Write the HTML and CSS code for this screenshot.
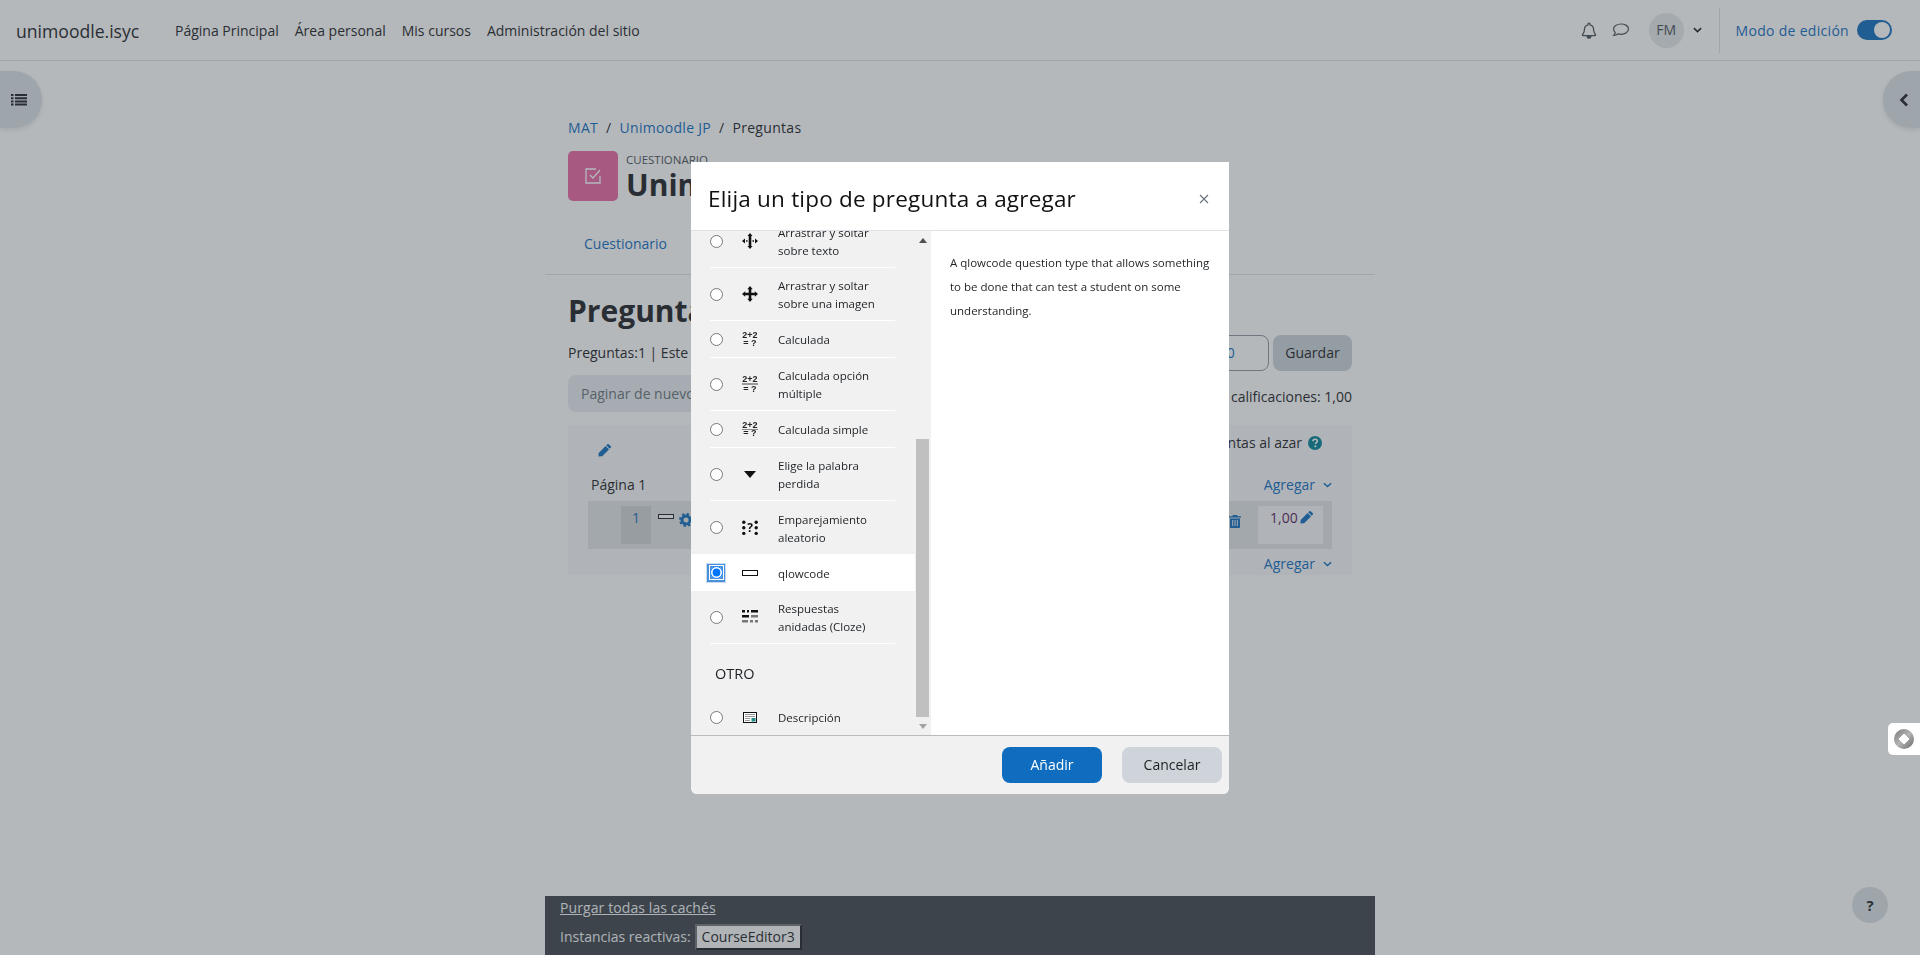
FILE: index.html
```html
<!DOCTYPE html>
<html lang="es">
<head>
	<meta charset="utf-8">
	<title>Preguntas</title>
	<link rel="stylesheet" href="styles.css">
</head>
<body>
	<div class="page">
		<header class="navbar">
			<a class="brand">unimoodle.isyc</a>
			<nav class="mainnav">
				<a>Página Principal</a>
				<a>Área personal</a>
				<a>Mis cursos</a>
				<a>Administración del sitio</a>
			</nav>
			<div class="usernav">
				<svg class="ico-bell" viewBox="0 0 16 17"><path d="M8 1.2c-.6 0-1 .4-1 1v.6C4.900 3.300 3.500 5 3.500 7.100c0 3.400-1 4.400-2 5.600-.3.400 0 .9.500.9h12c.5 0 .8-.5.500-.9-1-1.200-2-2.200-2-5.600C12.500 5 11.100 3.300 9 2.800v-.6c0-.6-.4-1-1-1zM6.300 14.800c.1.800.8 1.400 1.700 1.400s1.600-.6 1.700-1.400z" fill="none" stroke="#495057" stroke-width="1.300"/></svg>
				<svg class="ico-chat" viewBox="0 0 18 14"><path d="M9 1C4.800 1 1.500 3.100 1.500 6c0 1.300.7 2.500 1.800 3.400-.2.900-.8 2-1.500 3 1.500-.2 3-.8 4-1.500 1 .3 2 .4 3.200.4 4.200 0 7.500-2.300 7.500-5.300S13.200 1 9 1z" fill="none" stroke="#495057" stroke-width="1.200"/></svg>
				<span class="avatar">FM</span>
				<svg class="chev-down dark" viewBox="0 0 10 6"><path d="M1 1l4 3.800L9 1" fill="none" stroke="#1d2125" stroke-width="1.800"/></svg>
				<span class="divider"></span>
				<span class="editmode">Modo de edición</span>
				<span class="toggle"><i></i></span>
			</div>
		</header>

		<main class="column">
			<ol class="crumbs">
				<li><a>MAT</a></li>
				<li class="sep">/</li>
				<li><a>Unimoodle JP</a></li>
				<li class="sep">/</li>
				<li>Preguntas</li>
			</ol>
			<div class="pagehead">
				<span class="modicon">
					<svg viewBox="0 0 20 20" width="20" height="20"><path d="M17 10v7H3V3h10" fill="none" stroke="#fff" stroke-width="1.300"/><path d="M7 9l3 3 7-8" fill="none" stroke="#fff" stroke-width="1.300"/></svg>
				</span>
				<div>
					<div class="modtype">CUESTIONARIO</div>
					<div class="modname">Unimoodle JP</div>
				</div>
			</div>
			<div class="tabs">
				<a>Cuestionario</a>
			</div>
			<h2 class="heading">Preguntas</h2>
			<div class="bar">
				<span>Preguntas:1 | Este cuestionario está abierto</span>
				<div class="gradeform">
					<span class="gradeinput">10,00</span>
					<span class="btn-save">Guardar</span>
				</div>
			</div>
			<div class="bar second">
				<span class="btn-repage">Paginar de nuevo</span>
				<span class="totals">Total de calificaciones: 1,00</span>
			</div>
			<section class="panel">
				<div class="panel-top">
					<svg class="ico-pencil" viewBox="0 0 16 16"><path d="M12.200 1.300l2.500 2.500c.4.400.4 1 0 1.400L13.300 6.600 9.400 2.700l1.400-1.400c.4-.4 1-.4 1.400 0zM8.700 3.400l3.900 3.900-7.900 7.900-4.200.3.300-4.200z" fill="#0f6cbf"/></svg>
					<span class="shuffle">Mezclar preguntas al azar
						<svg class="ico-help" viewBox="0 0 14 14"><circle cx="7" cy="7" r="7" fill="#008196"/><path d="M4.800 5.300C4.900 4 5.900 3.200 7.100 3.200c1.300 0 2.200.8 2.200 1.900 0 1.600-1.900 1.500-1.900 3" fill="none" stroke="#fff" stroke-width="1.600"/><rect x="6.400" y="9.400" width="1.900" height="1.800" fill="#fff"/></svg>
					</span>
				</div>
				<div class="page-row">
					<span>Página 1</span>
					<a class="addlink">Agregar <svg class="chev-down" viewBox="0 0 10 6"><path d="M1 1l4 3.800L9 1" fill="none" stroke="#0f6cbf" stroke-width="1.600"/></svg></a>
				</div>
				<div class="slot">
					<span class="slotnum">1</span>
					<span class="slotbox"></span>
					<svg class="ico-gear" viewBox="0 0 14 14"><circle cx="7" cy="7" r="4" fill="none" stroke="#0f6cbf" stroke-width="2.800"/><circle cx="7" cy="7" r="6" fill="none" stroke="#0f6cbf" stroke-width="2" stroke-dasharray="2.400 2.300"/></svg>
					<svg class="ico-trash" viewBox="0 0 12 14"><path d="M4 1h4l.7 1.200H12v1.400H0V2.200h3.300zM1 4.500h10V13c0 .6-.4 1-1 1H2c-.6 0-1-.4-1-1z" fill="#0f6cbf"/><path d="M3.700 6v6M6 6v6M8.300 6v6" stroke="#e9ecef" stroke-width="1"/></svg>
					<span class="slotmark">1,00<svg class="ico-pencil" viewBox="0 0 16 16"><path d="M12.200 1.300l2.500 2.500c.4.400.4 1 0 1.400L13.300 6.600 9.400 2.700l1.400-1.400c.4-.4 1-.4 1.400 0zM8.700 3.400l3.900 3.900-7.900 7.900-4.200.3.300-4.200z" fill="#0f6cbf"/></svg></span>
				</div>
				<div class="page-row last">
					<a class="addlink">Agregar <svg class="chev-down" viewBox="0 0 10 6"><path d="M1 1l4 3.800L9 1" fill="none" stroke="#0f6cbf" stroke-width="1.600"/></svg></a>
				</div>
			</section>
			<footer class="pagefoot">
				<a>Purgar todas las cachés</a>
				<div class="reactive">Instancias reactivas: <span class="reactive-btn">CourseEditor3</span></div>
			</footer>
		</main>

		<span class="drawer-toggle left">
			<svg viewBox="0 0 16 13" width="16" height="13"><path d="M0 1h2.500v2H0zM4 1h12v2H4zM0 4.200h2.500v2H0zM4 4.200h12v2H4zM0 7.400h2.500v2H0zM4 7.400h12v2H4zM0 10.600h2.500v2H0zM4 10.600h12v2H4z" fill="#1d2125"/></svg>
		</span>
		<span class="drawer-toggle right">
			<svg viewBox="0 0 10 14" width="10" height="14"><path d="M8 1.500L2.500 7 8 12.500" fill="none" stroke="#1d2125" stroke-width="2.600"/></svg>
		</span>
		<span class="helpbtn">?</span>
	</div>

	<div class="backdrop"></div>

	<div class="sidetab">
		<svg viewBox="0 0 22 22" width="22" height="22">
			<defs><linearGradient id="ring" x1="0" y1="0" x2="1" y2="1"><stop offset="0" stop-color="#777"/><stop offset=".5" stop-color="#b5b5b5"/><stop offset="1" stop-color="#666"/></linearGradient></defs>
			<circle cx="11" cy="11" r="10" fill="url(#ring)"/>
			<path d="M11 6L16 11 11 16 6 11z" fill="#fff" stroke="#fff" stroke-linejoin="round"/>
		</svg>
	</div>

	<div class="modalwrap">
		<div class="modal">
			<div class="modal-head">
				<h5>Elija un tipo de pregunta a agregar</h5>
				<svg class="closex" viewBox="0 0 10 10" width="10" height="10"><path d="M1 1l8 8M9 1l-8 8" stroke="#6a737b" stroke-width="1.100"/></svg>
			</div>
			<div class="modal-body">
				<div class="options">
					<div class="options-scroll">
						<ul class="optlist">
							<li class="opt"><div class="opt-in">
								<input type="radio" name="qtype">
								<span class="qicon"><svg viewBox="0 0 16 16" width="16" height="16"><path d="M8 0l2.500 3h-5zM8 16l-2.500-3h5zM0 8l3-2.500v5zM16 8l-3 2.500v-5z" fill="#111"/><path d="M6.700 3h2.600v10H6.700zM4 7.200h1.500v1.600H4zM10.500 7.200H12v1.600h-1.500z" fill="#111"/></svg></span>
								<span class="optlabel">Arrastrar y soltar sobre texto</span>
							</div></li>
							<li class="opt"><div class="opt-in">
								<input type="radio" name="qtype">
								<span class="qicon"><svg viewBox="0 0 16 16" width="16" height="16"><path d="M8 0l2.700 3.200H9.300v3.500h3.500V5.300L16 8l-3.200 2.700V9.300H9.300v3.500h1.400L8 16l-2.700-3.200h1.400V9.300H3.200v1.400L0 8l3.200-2.700v1.400h3.500V3.200H5.300z" fill="#111"/></svg></span>
								<span class="optlabel">Arrastrar y soltar sobre una imagen</span>
							</div></li>
							<li class="opt"><div class="opt-in">
								<input type="radio" name="qtype">
								<span class="qicon calc"><b>2+2</b><b>= ?</b></span>
								<span class="optlabel">Calculada</span>
							</div></li>
							<li class="opt"><div class="opt-in">
								<input type="radio" name="qtype">
								<span class="qicon calc multi"><b>2+2</b><b>= ?</b></span>
								<span class="optlabel">Calculada opción múltiple</span>
							</div></li>
							<li class="opt"><div class="opt-in">
								<input type="radio" name="qtype">
								<span class="qicon calc simple"><b>2+2</b><b>= ?</b></span>
								<span class="optlabel">Calculada simple</span>
							</div></li>
							<li class="opt"><div class="opt-in">
								<input type="radio" name="qtype">
								<span class="qicon"><svg viewBox="0 0 14 8" width="14" height="8"><path d="M1 1h12L7 8z" fill="#111"/></svg></span>
								<span class="optlabel">Elige la palabra perdida</span>
							</div></li>
							<li class="opt nosep"><div class="opt-in">
								<input type="radio" name="qtype">
								<span class="qicon"><svg viewBox="0 0 16 16" width="16" height="16" fill="#111"><circle cx="1.800" cy="2.200" r="1.700"/><circle cx="1.800" cy="7.800" r="1.700"/><circle cx="1.800" cy="13.400" r="1.700"/><circle cx="14.200" cy="2.200" r="1.700"/><circle cx="14.200" cy="7.800" r="1.700"/><circle cx="14.200" cy="13.400" r="1.700"/><text x="8" y="12" font-size="12" font-weight="700" text-anchor="middle" font-family="Open Sans, sans-serif">?</text></svg></span>
								<span class="optlabel">Emparejamiento aleatorio</span>
							</div></li>
							<li class="opt selected"><div class="opt-in">
								<span class="radiofocus"><input type="radio" name="qtype" checked></span>
								<span class="qicon"><span class="blankbox"></span></span>
								<span class="optlabel">qlowcode</span>
							</div></li>
							<li class="opt"><div class="opt-in">
								<input type="radio" name="qtype">
								<span class="qicon"><svg viewBox="0 0 16 14" width="16" height="14"><path d="M0 0h3v2.500H0zM5 0h2v2.500H5zM9 0h7v2.500H9zM0 5h7v2.500H0z" fill="#111"/><path d="M9 5h7v2.500H9zM0 10h6v2.500H0zM8 10h3v2.500H8zM13 10h3v2.500h-3z" fill="#777"/></svg></span>
								<span class="optlabel">Respuestas anidadas (Cloze)</span>
							</div></li>
						</ul>
						<h6 class="optgroup">OTRO</h6>
						<div class="opt bare"><div class="opt-in">
							<input type="radio" name="qtype">
							<span class="qicon"><svg viewBox="0 0 14 11" width="14" height="11"><rect x=".5" y=".5" width="13" height="10" fill="#fff" stroke="#111"/><path d="M2 2.500h10M2 4.500h10M2 6.500h5M2 8.500h5" stroke="#999"/><rect x="8.500" y="6" width="4" height="3.500" fill="#1f8a8a"/></svg></span>
							<span class="optlabel">Descripción</span>
						</div></div>
					</div>
					<div class="rail">
						<svg class="arrow" viewBox="0 0 8 5" width="8" height="5"><path d="M4 0l4 5H0z" fill="#505050"/></svg>
						<span class="rail-gap"></span>
						<span class="thumb"></span>
						<svg class="arrow" viewBox="0 0 8 5" width="8" height="5"><path d="M0 0h8L4 5z" fill="#a3a3a3"/></svg>
					</div>
				</div>
				<div class="summary">A qlowcode question type that allows something to be done that can test a student on some understanding.</div>
			</div>
			<div class="modal-foot">
				<span class="btn primary">Añadir</span>
				<span class="btn secondary">Cancelar</span>
			</div>
		</div>
	</div>
</body>
</html>
```

FILE: styles.css
```css
*{
	margin:0;
	padding:0;
	box-sizing:border-box;
}
html,body{
	height:955px;
	overflow:hidden;
}
body{
	background:#fff;
	color:#1d2125;
	font-family:"Open Sans","Noto Sans",sans-serif;
	font-size:14px;
	line-height:22px;
}
a{
	color:#0f6cbf;
}
ul,ol{
	list-style:none;
}
svg{
	display:block;
	flex:none;
}

/* page under the backdrop */
.page{
	height:955px;
	display:flex;
	flex-direction:column;
}
.navbar{
	height:61px;
	flex:none;
	display:flex;
	align-items:center;
	padding:0 28px 0 16px;
	border-bottom:1px solid #dee2e6;
}
.brand{
	font-size:17.600px;
	color:#1d2125;
	padding-top:2px;
	margin-right:35px;
	width:124px;
	white-space:nowrap;
}
.mainnav{
	display:flex;
	gap:16px;
	padding-top:2px;
}
.mainnav a{
	color:#1d2125;
}
.usernav{
	margin-left:auto;
	display:flex;
	align-items:center;
}
.ico-bell{
	width:16px;
	height:17px;
}
.ico-chat{
	width:18px;
	height:14px;
	margin-left:15px;
}
.avatar{
	width:35px;
	height:35px;
	border-radius:50%;
	background:#e6e8ea;
	display:flex;
	align-items:center;
	justify-content:center;
	color:#495057;
	margin-left:19px;
}
.chev-down{
	width:9px;
	height:6px;
}
.chev-down.dark{
	margin-left:9px;
}
.divider{
	width:1px;
	height:45px;
	background:#dee2e6;
	margin:0 16px 0 17px;
}
.editmode{
	color:#0f6cbf;
	letter-spacing:.3px;
	padding-top:2px;
}
.toggle{
	width:35px;
	height:20px;
	border-radius:10px;
	background:#0f6cbf;
	margin-left:8px;
	display:flex;
	justify-content:flex-end;
	align-items:center;
	padding-right:2px;
}
.toggle i{
	width:16px;
	height:16px;
	border-radius:50%;
	background:#fff;
}

.column{
	width:830px;
	flex:1;
	margin:0 auto;
	padding:56px 23px 0;
	display:flex;
	flex-direction:column;
}
.crumbs{
	display:flex;
	gap:8px;
	height:22px;
	margin-bottom:12px;
	letter-spacing:.3px;
}
.pagehead{
	display:flex;
	gap:8px;
	height:50px;
}
.modicon{
	width:50px;
	height:50px;
	background:#eb66a2;
	border-radius:5px;
	display:flex;
	align-items:center;
	justify-content:center;
}
.modtype{
	font-size:11.500px;
	line-height:14px;
	color:#495057;
	margin-top:2px;
}
.modname{
	font-size:30px;
	line-height:36px;
	font-weight:700;
}
.tabs{
	margin:20px -23px 0;
	height:54px;
	padding:12px 0 0 39px;
	border-bottom:1px solid #dee2e6;
}
.heading{
	font-size:30px;
	line-height:38px;
	font-weight:700;
	margin-top:17px;
}
.bar{
	display:flex;
	justify-content:space-between;
	align-items:center;
	height:36px;
	margin-top:5px;
}
.bar.second{
	height:37px;
	margin-top:4px;
	align-items:flex-start;
}
.gradeform{
	display:flex;
	gap:4px;
}
.gradeinput{
	width:79px;
	height:36px;
	border:1px solid #8f959e;
	border-radius:8px;
	padding:6px 8px;
	color:#0f6cbf;
}
.btn-save{
	width:79px;
	height:36px;
	border-radius:8px;
	background:#ced4da;
	text-align:center;
	padding-top:7px;
}
.btn-repage{
	height:37px;
	width:200px;
	border-radius:8px;
	background:#e9ecef;
	color:#6a737b;
	padding:8px 13px;
}
.totals{
	padding-top:11px;
}
.panel{
	margin-top:13px;
	height:150px;
	padding:0 20px;
	background:#f8f9fa;
}
.panel-top{
	height:49px;
	padding:7px 0 0 10px;
	display:flex;
	justify-content:space-between;
	align-items:flex-start;
}
.panel-top .ico-pencil{
	margin-top:11px;
}
.ico-pencil{
	width:14px;
	height:14px;
}
.shuffle{
	display:flex;
	align-items:center;
	gap:6px;
	margin-right:10px;
}
.ico-help{
	width:14px;
	height:14px;
}
.page-row{
	display:flex;
	justify-content:space-between;
	padding-left:3px;
	height:22px;
}
.page-row.last{
	justify-content:flex-end;
	margin-top:4px;
}
.addlink{
	display:flex;
	align-items:center;
	gap:8px;
}
.slot{
	height:48px;
	margin-top:5px;
	background:#e3e5e7;
	padding:5px 9px 5px 33px;
	display:flex;
	align-items:flex-start;
}
.slotnum{
	width:30px;
	height:38px;
	background:#d2d4d6;
	text-align:center;
	padding-top:1px;
	color:#0f6cbf;
}
.slotbox{
	width:16px;
	height:5px;
	border:1px solid #1d2125;
	background:#fff;
	margin:8px 5px 0 7px;
}
.ico-gear{
	width:14px;
	height:14px;
	margin-top:7px;
}
.ico-trash{
	width:12px;
	height:14px;
	margin:8px 17px 0 auto;
}
.slotmark{
	width:65px;
	height:38px;
	background:#f8f9fa;
	display:flex;
	align-items:flex-start;
	padding:1px 0 0 12px;
	color:#5a1a5c;
	gap:2px;
}
.slotmark .ico-pencil{
	margin-top:3px;
}
.pagefoot{
	margin:auto -23px 0;
	height:59px;
	background:#3f444b;
	color:#f4f6f7;
	padding:0 15px;
}
.pagefoot a{
	display:block;
	color:#f4f6f7;
	text-decoration:underline;
	line-height:24px;
	letter-spacing:.1px;
}
.reactive{
	display:flex;
	align-items:center;
	gap:4px;
	height:28px;
	margin-top:3px;
}
.reactive-btn{
	height:26px;
	padding:0 5px;
	background:#f9f9f9;
	color:#1d2125;
	border:2px solid #1d2125;
	border-left-color:#777;
	border-top-color:#777;
	line-height:22px;
}

.drawer-toggle{
	position:absolute;
	top:71px;
	width:42px;
	height:57px;
	background:#dee2e6;
	box-shadow:0 2px 4px rgba(0,0,0,.1);
	display:flex;
	align-items:center;
}
.drawer-toggle.left{
	left:0;
	border-radius:0 28px 28px 0;
	padding-left:11px;
}
.drawer-toggle.right{
	right:0;
	width:37px;
	border-radius:28px 0 0 28px;
	padding-left:16px;
}
.helpbtn{
	position:absolute;
	left:1852px;
	top:887px;
	width:36px;
	height:36px;
	border-radius:50%;
	background:#dee2e6;
	text-align:center;
	font-weight:700;
	font-size:15px;
	line-height:36px;
}

.backdrop{
	position:fixed;
	inset:0;
	background:rgba(58,68,76,.38);
}
.sidetab{
	position:fixed;
	right:0;
	top:723px;
	width:32px;
	height:32px;
	background:#fff;
	border-radius:5px 0 0 5px;
	padding:5px;
}

/* modal */
.modalwrap{
	position:fixed;
	inset:0;
	display:flex;
	justify-content:center;
	padding-top:162px;
}
.modal{
	width:538px;
	height:632px;
	background:#fff;
	border-radius:0 0 6px 6px;
	overflow:hidden;
}
.modal-head{
	height:69px;
	padding:5px 20px 0 17px;
	border-bottom:1px solid #dee2e6;
	display:flex;
	align-items:center;
	justify-content:space-between;
}
.modal-head h5{
	font-size:22.500px;
	font-weight:400;
	line-height:28px;
	letter-spacing:.2px;
	color:#111;
}
.modal-body{
	height:505px;
	display:flex;
	border-bottom:1px solid #bbb;
}
.options{
	width:240px;
	height:504px;
	background:#f1f1f1;
	display:flex;
}
.options-scroll{
	width:224px;
	overflow:hidden;
}
.optlist{
	margin-top:-16px;
}
.opt{
	padding:0 20px 0 19px;
	font-size:11.500px;
	line-height:18px;
	color:#1d2125;
}
.opt-in{
	display:flex;
	align-items:center;
	min-height:37px;
	padding:8px 0;
	border-bottom:1px solid #fff;
}
.opt.nosep .opt-in{
	min-height:53px;
}
.opt.nosep .opt-in,
.opt.selected .opt-in,
.opt.bare .opt-in{
	border-bottom:0;
}
.opt.selected{
	background:#fff;
}
.opt input{
	flex:none;
	width:13px;
	height:13px;
}
.radiofocus{
	flex:none;
	width:20px;
	height:20px;
	margin:0 -3px 0 -4px;
	background:#4a90d9;
	border:1px solid #c7dcf3;
	display:flex;
	align-items:center;
	justify-content:center;
}
.radiofocus input{
	accent-color:#0075ff;
	box-shadow:0 0 0 1px #fff;
	border-radius:50%;
}
.qicon{
	flex:none;
	width:24px;
	margin:0 16px 0 15px;
	display:flex;
	flex-direction:column;
	align-items:center;
	justify-content:center;
}
.calc b{
	font-family:"Liberation Sans",sans-serif;
	font-size:9px;
	line-height:8px;
	font-weight:700;
	color:#222;
}
.calc.multi b:first-child{
	border-bottom:2px solid #999;
}
.calc.simple b:first-child{
	box-shadow:0 1px 0 #888;
}
.blankbox{
	width:16px;
	height:6px;
	border:1px solid #111;
	background:#fff;
}
.optlabel{
	width:108px;
	padding-top:1px;
	margin-bottom:-1px;
}
.opt.bare .optlabel{
	padding-top:0;
	margin-bottom:0;
}
.optgroup{
	font-size:14.500px;
	font-weight:400;
	line-height:22px;
	padding:1px 0 0 24px;
	margin-top:18px;
	color:#1d2125;
}
.opt.bare{
	margin-top:14px;
}
.rail{
	width:16px;
	padding:0 2px 0 1px;
	display:flex;
	flex-direction:column;
	align-items:center;
}
.arrow{
	margin:7px 0 6px;
}
.rail-gap{
	height:190px;
}
.thumb{
	width:13px;
	flex:1;
	background:#c0c0c0;
}
.summary{
	flex:1;
	padding:20px 19px;
	font-size:11.500px;
	line-height:24px;
	color:#1d2125;
}
.modal-foot{
	height:58px;
	background:#f1f1f1;
	display:flex;
	justify-content:flex-end;
	gap:20px;
	padding:11px 7px 0 0;
}
.btn{
	width:100px;
	height:36px;
	border-radius:8px;
	text-align:center;
	line-height:36px;
}
.btn.primary{
	background:#0f6cbf;
	color:#fff;
}
.btn.secondary{
	background:#ced4da;
	color:#1d2125;
}
```
